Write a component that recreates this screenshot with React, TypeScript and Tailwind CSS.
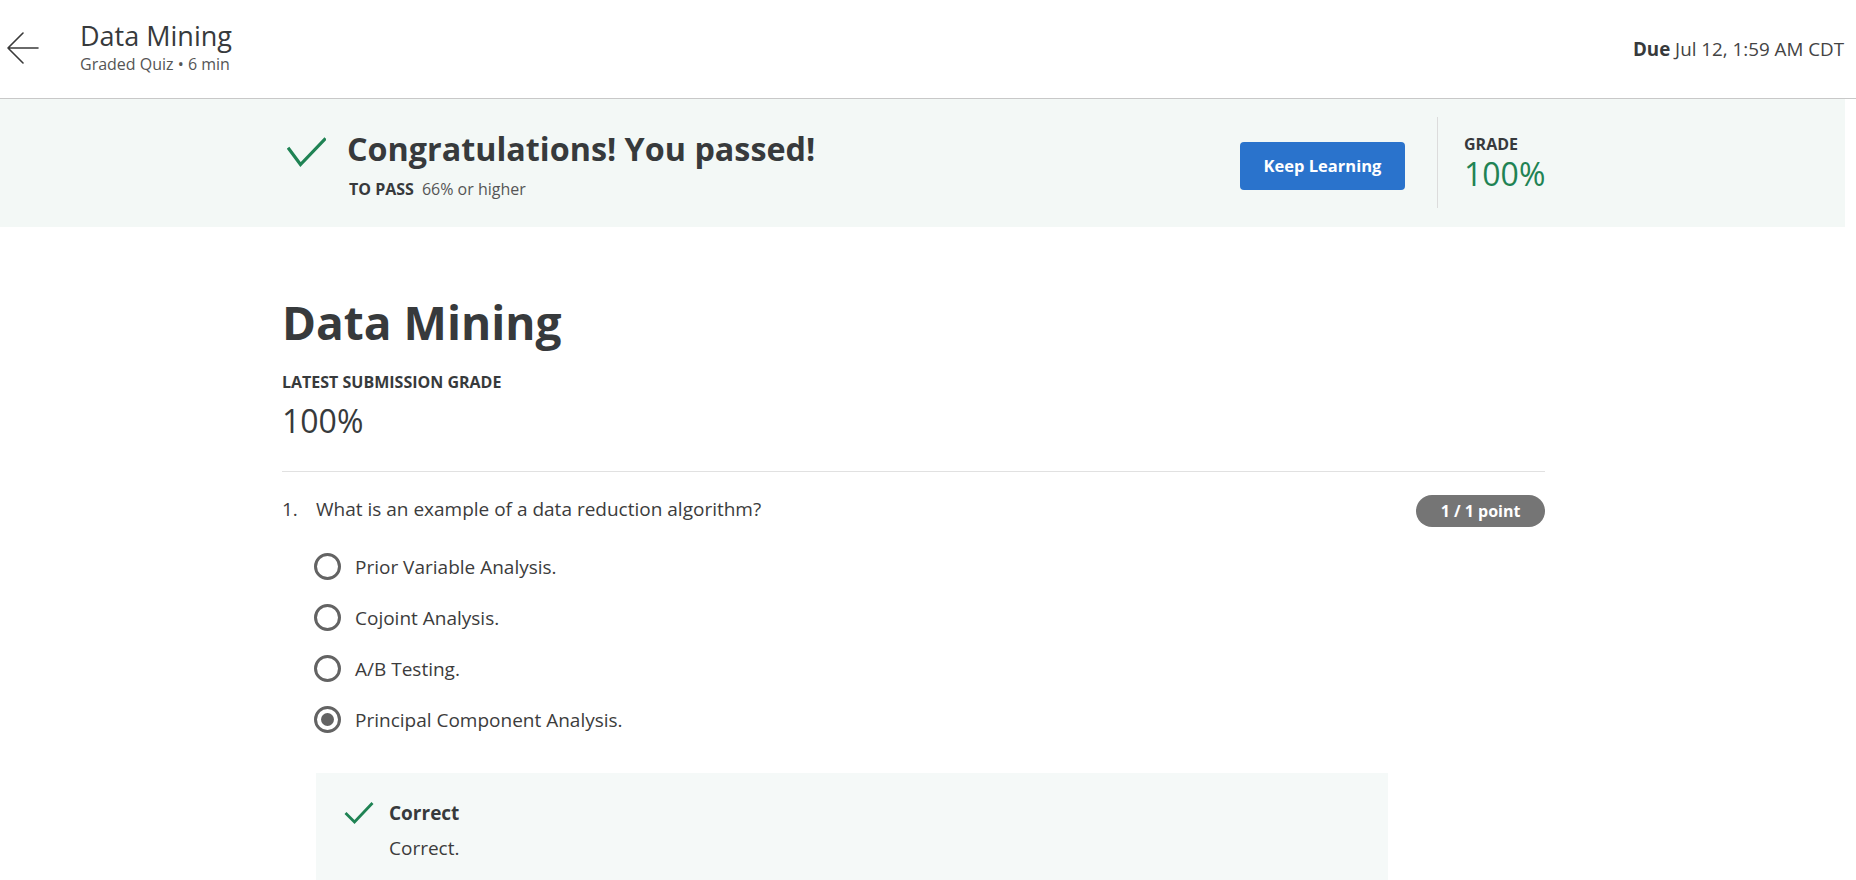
import React from "react";

function RadioOption({ label, selected }: { label: string; selected?: boolean }) {
  return (
    <div className="flex items-center h-[51px]">
      <div className="w-[27px] h-[27px] rounded-full border-[3px] border-[#636363] flex items-center justify-center shrink-0">
        {selected && <div className="w-[13px] h-[13px] rounded-full bg-[#636363]" />}
      </div>
      <span className="ml-[14px] text-[19px] leading-[26px] text-[#3c3c3c]">{label}</span>
    </div>
  );
}

export default function App() {
  return (
    <div className="w-[1856px] h-[880px] overflow-hidden bg-white text-[#373a3c] font-['Open_Sans',sans-serif]">
      {/* Header */}
      <header className="h-[99px] border-b border-[#c8c8c8] flex items-start">
        <svg className="ml-[6px] mt-[32px] shrink-0" width="33" height="32" viewBox="0 0 33 32" fill="none">
          <path d="M32 16H2M17 1L2 16l15 15" stroke="#3a3a3a" strokeWidth="1.6" strokeLinecap="round" strokeLinejoin="round" />
        </svg>
        <div className="ml-[41px] pt-[19px] flex flex-col">
          <div className="text-[27px] leading-[34px] text-[#373a3c]">Data Mining</div>
          <div className="text-[16px] leading-[22px] text-[#555]">Graded Quiz • 6 min</div>
        </div>
        <div className="ml-auto mr-[12px] mt-[36px] text-[18.8px] leading-[26px] text-[#444]">
          <span className="font-bold text-[#373a3c]">Due</span> Jul 12, 1:59 AM CDT
        </div>
      </header>

      {/* Banner */}
      <section className="w-[1845px] h-[128px] bg-[#f3f8f6]">
        <div className="ml-[282px] w-[1263px] h-full flex items-start">
          <svg className="ml-[5px] mt-[38px] shrink-0" width="39" height="30" viewBox="0 0 39 30" fill="none">
            <path d="M2 12l11.5 15.5L37.5 2.5" stroke="#1f8354" strokeWidth="3.2" strokeLinecap="square" />
          </svg>
          <div className="ml-[21px] mt-[29px] flex flex-col">
            <div className="text-[32.3px] leading-[40px] font-bold text-[#373a3c]">Congratulations! You passed!</div>
            <div className="mt-[10px] ml-[2px] text-[16px] leading-[22px] text-[#555]">
              <span className="font-bold text-[#373a3c]">TO PASS</span>
              <span className="ml-[8px]">66% or higher</span>
            </div>
          </div>
          <div className="ml-auto flex items-start">
            <button className="mt-[43px] w-[165px] h-[48px] rounded-[4px] bg-[#2a73cc] text-white text-[16.5px] font-bold">
              Keep Learning
            </button>
            <div className="ml-[32px] mt-[18px] w-px h-[91px] bg-[#dcdcdc]" />
            <div className="ml-[26px] mt-[35px] w-[81px] flex flex-col">
              <div className="text-[16px] leading-[20px] font-bold text-[#373a3c]">GRADE</div>
              <div className="text-[32px] leading-[40px] text-[#1f8354]">100%</div>
            </div>
          </div>
        </div>
      </section>

      {/* Main */}
      <main className="ml-[282px] w-[1263px]">
        <h1 className="mt-[67px] text-[46px] leading-[56px] font-bold text-[#373a3c]">Data Mining</h1>
        <div className="mt-[22px] text-[16px] leading-[20px] font-bold text-[#373a3c]">LATEST SUBMISSION GRADE</div>
        <div className="mt-[9px] text-[32px] leading-[40px] text-[#373a3c]">100%</div>
        <div className="mt-[30px] h-px bg-[#e1e1e1]" />

        <div className="mt-[24px] flex items-start">
          <span className="w-[34px] text-[19px] leading-[26px] text-[#3c3c3c]">1.</span>
          <span className="text-[19px] leading-[26px] text-[#3c3c3c]">What is an example of a data reduction algorithm?</span>
          <span className="ml-auto mt-[-1px] h-[32px] w-[129px] rounded-full bg-[#757575] text-white text-[16px] font-bold flex items-center justify-center">
            1 / 1 point
          </span>
        </div>

        <div className="ml-[32px] mt-[14px] flex flex-col">
          <RadioOption label="Prior Variable Analysis." />
          <RadioOption label="Cojoint Analysis." />
          <RadioOption label="A/B Testing." />
          <RadioOption label="Principal Component Analysis." selected />
        </div>

        <div className="ml-[34px] mt-[28px] w-[1072px] h-[140px] bg-[#f5f9f8] pt-[27px] pl-[28px]">
          <div className="flex items-start">
            <svg className="mt-[1px] shrink-0" width="30" height="23" viewBox="0 0 30 23" fill="none">
              <path d="M1.5 12l9 9L28.5 2" stroke="#1f8354" strokeWidth="2.8" />
            </svg>
            <div className="ml-[15px] flex flex-col">
              <div className="text-[19px] leading-[26px] font-bold text-[#373a3c]">Correct</div>
              <div className="mt-[9px] text-[19px] leading-[26px] text-[#3c3c3c]">Correct.</div>
            </div>
          </div>
        </div>
      </main>
    </div>
  );
}
